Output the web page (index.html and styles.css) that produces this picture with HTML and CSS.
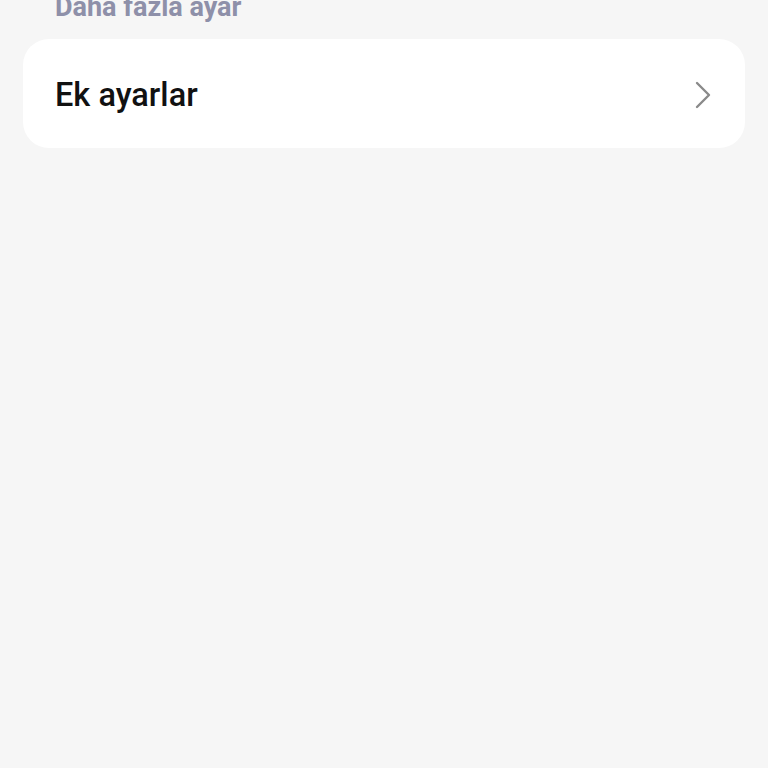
FILE: index.html
```html
<!DOCTYPE html>
<html lang="tr">
<head>
<meta charset="utf-8">
<link rel="stylesheet" href="styles.css">
</head>
<body>
<div class="page">
  <div class="section-title">Daha fazla ayar</div>
  <div class="card">
    <div class="row">
      <span class="row-label">Ek ayarlar</span>
      <svg class="chevron" width="18" height="28" viewBox="0 0 18 28">
        <path d="M3 2 L15 14 L3 26" fill="none" stroke="#8a8a8a" stroke-width="2.4" stroke-linecap="round" stroke-linejoin="round"/>
      </svg>
    </div>
  </div>
</div>
</body>
</html>
```
FILE: styles.css
```css
html, body {
  margin: 0;
  padding: 0;
  background: #f6f6f6;
  font-family: Roboto, "Noto Sans", sans-serif;
}
.page {
  width: 768px;
  height: 768px;
  overflow: hidden;
  box-sizing: border-box;
  padding: 0 23px;
}
.section-title {
  margin-top: -8px;
  padding-left: 32px;
  font-size: 27px;
  line-height: 30px;
  font-weight: 700;
  color: #8e90a9;
}
.card {
  margin-top: 17px;
  background: #ffffff;
  border-radius: 26px;
  height: 109px;
  display: flex;
  align-items: center;
}
.row {
  flex: 1;
  display: flex;
  align-items: center;
  justify-content: space-between;
  padding: 0 33px 0 32px;
}
.row-label {
  font-size: 32.5px;
  color: #111111;
  font-weight: 500;
  margin-top: 2px;
}
.chevron {
  display: block;
  margin-top: 2px;
}
```
